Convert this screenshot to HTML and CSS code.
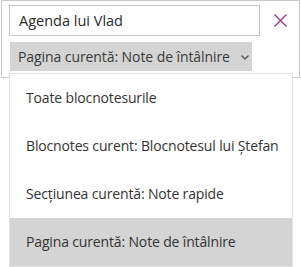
FILE: index.html
```html
<!DOCTYPE html>
<html lang="ro">
<head>
<meta charset="utf-8">
<link rel="stylesheet" href="styles.css">
</head>
<body>
<div class="panel">
  <div class="search-row">
    <div class="search-box">Agenda lui Vlad</div>
    <svg class="close" width="13" height="13" viewBox="0 0 13 13">
      <path d="M0.5 0.5 L12.5 12.5 M12.5 0.5 L0.5 12.5" stroke="#8a3a8c" stroke-width="1.3" fill="none"/>
    </svg>
  </div>
  <div class="scope">
    <span>Pagina curentă: Note de întâlnire</span>
    <svg class="chev" width="8" height="5" viewBox="0 0 8 5">
      <path d="M0.5 0.5 L4 4 L7.5 0.5" stroke="#555" stroke-width="1.3" fill="none"/>
    </svg>
  </div>
</div>
<ul class="menu">
  <li class="item">Toate blocnotesurile</li>
  <li class="item">Blocnotes curent: Blocnotesul lui Ștefan</li>
  <li class="item">Secțiunea curentă: Note rapide</li>
  <li class="item selected">Pagina curentă: Note de întâlnire</li>
</ul>
</body>
</html>
```
FILE: styles.css
```css
html, body {
  margin: 0;
  padding: 0;
  background: #fff;
}
body {
  width: 301px;
  height: 267px;
  position: relative;
  overflow: hidden;
  font-family: "Open Sans", "Noto Sans", sans-serif;
  font-size: 14px;
  letter-spacing: -0.15px;
  color: #333;
}
.panel {
  margin: 0 1px 0 1px;
  width: 299px;
  height: 78px;
  border: 1px solid #c8c8c8;
  padding: 4px 0 0 7px;
  box-sizing: border-box;
}
.search-row {
  display: flex;
  align-items: center;
  gap: 14px;
}
.search-box {
  width: 251px;
  height: 31px;
  box-sizing: border-box;
  border: 1px solid #c6c6c6;
  padding-left: 9px;
  line-height: 29px;
  font-size: 14.5px;
  letter-spacing: 0;
  color: #2b2b2b;
}
.close {
  display: block;
}
.scope {
  margin: 6px 0 0 1px;
  width: 242px;
  height: 29px;
  background: #d4d4d4;
  display: flex;
  align-items: center;
  padding: 0 0 0 8px;
  box-sizing: border-box;
  color: #3a3a3a;
  letter-spacing: -0.08px;
  white-space: nowrap;
}
.scope span {
  flex: 1;
}
.chev {
  display: block;
  margin-right: 3px;
  margin-top: 2px;
}
.menu {
  position: absolute;
  left: 9px;
  top: 73px;
  width: 284px;
  margin: 0;
  padding: 0;
  list-style: none;
  border: 1px solid #e2e2e2;
  box-sizing: border-box;
  background: #fff;
}
.item {
  height: 48px;
  line-height: 48px;
  padding-left: 16px;
  color: #333;
  white-space: nowrap;
}
.item.selected {
  background: #d4d4d4;
}
```
